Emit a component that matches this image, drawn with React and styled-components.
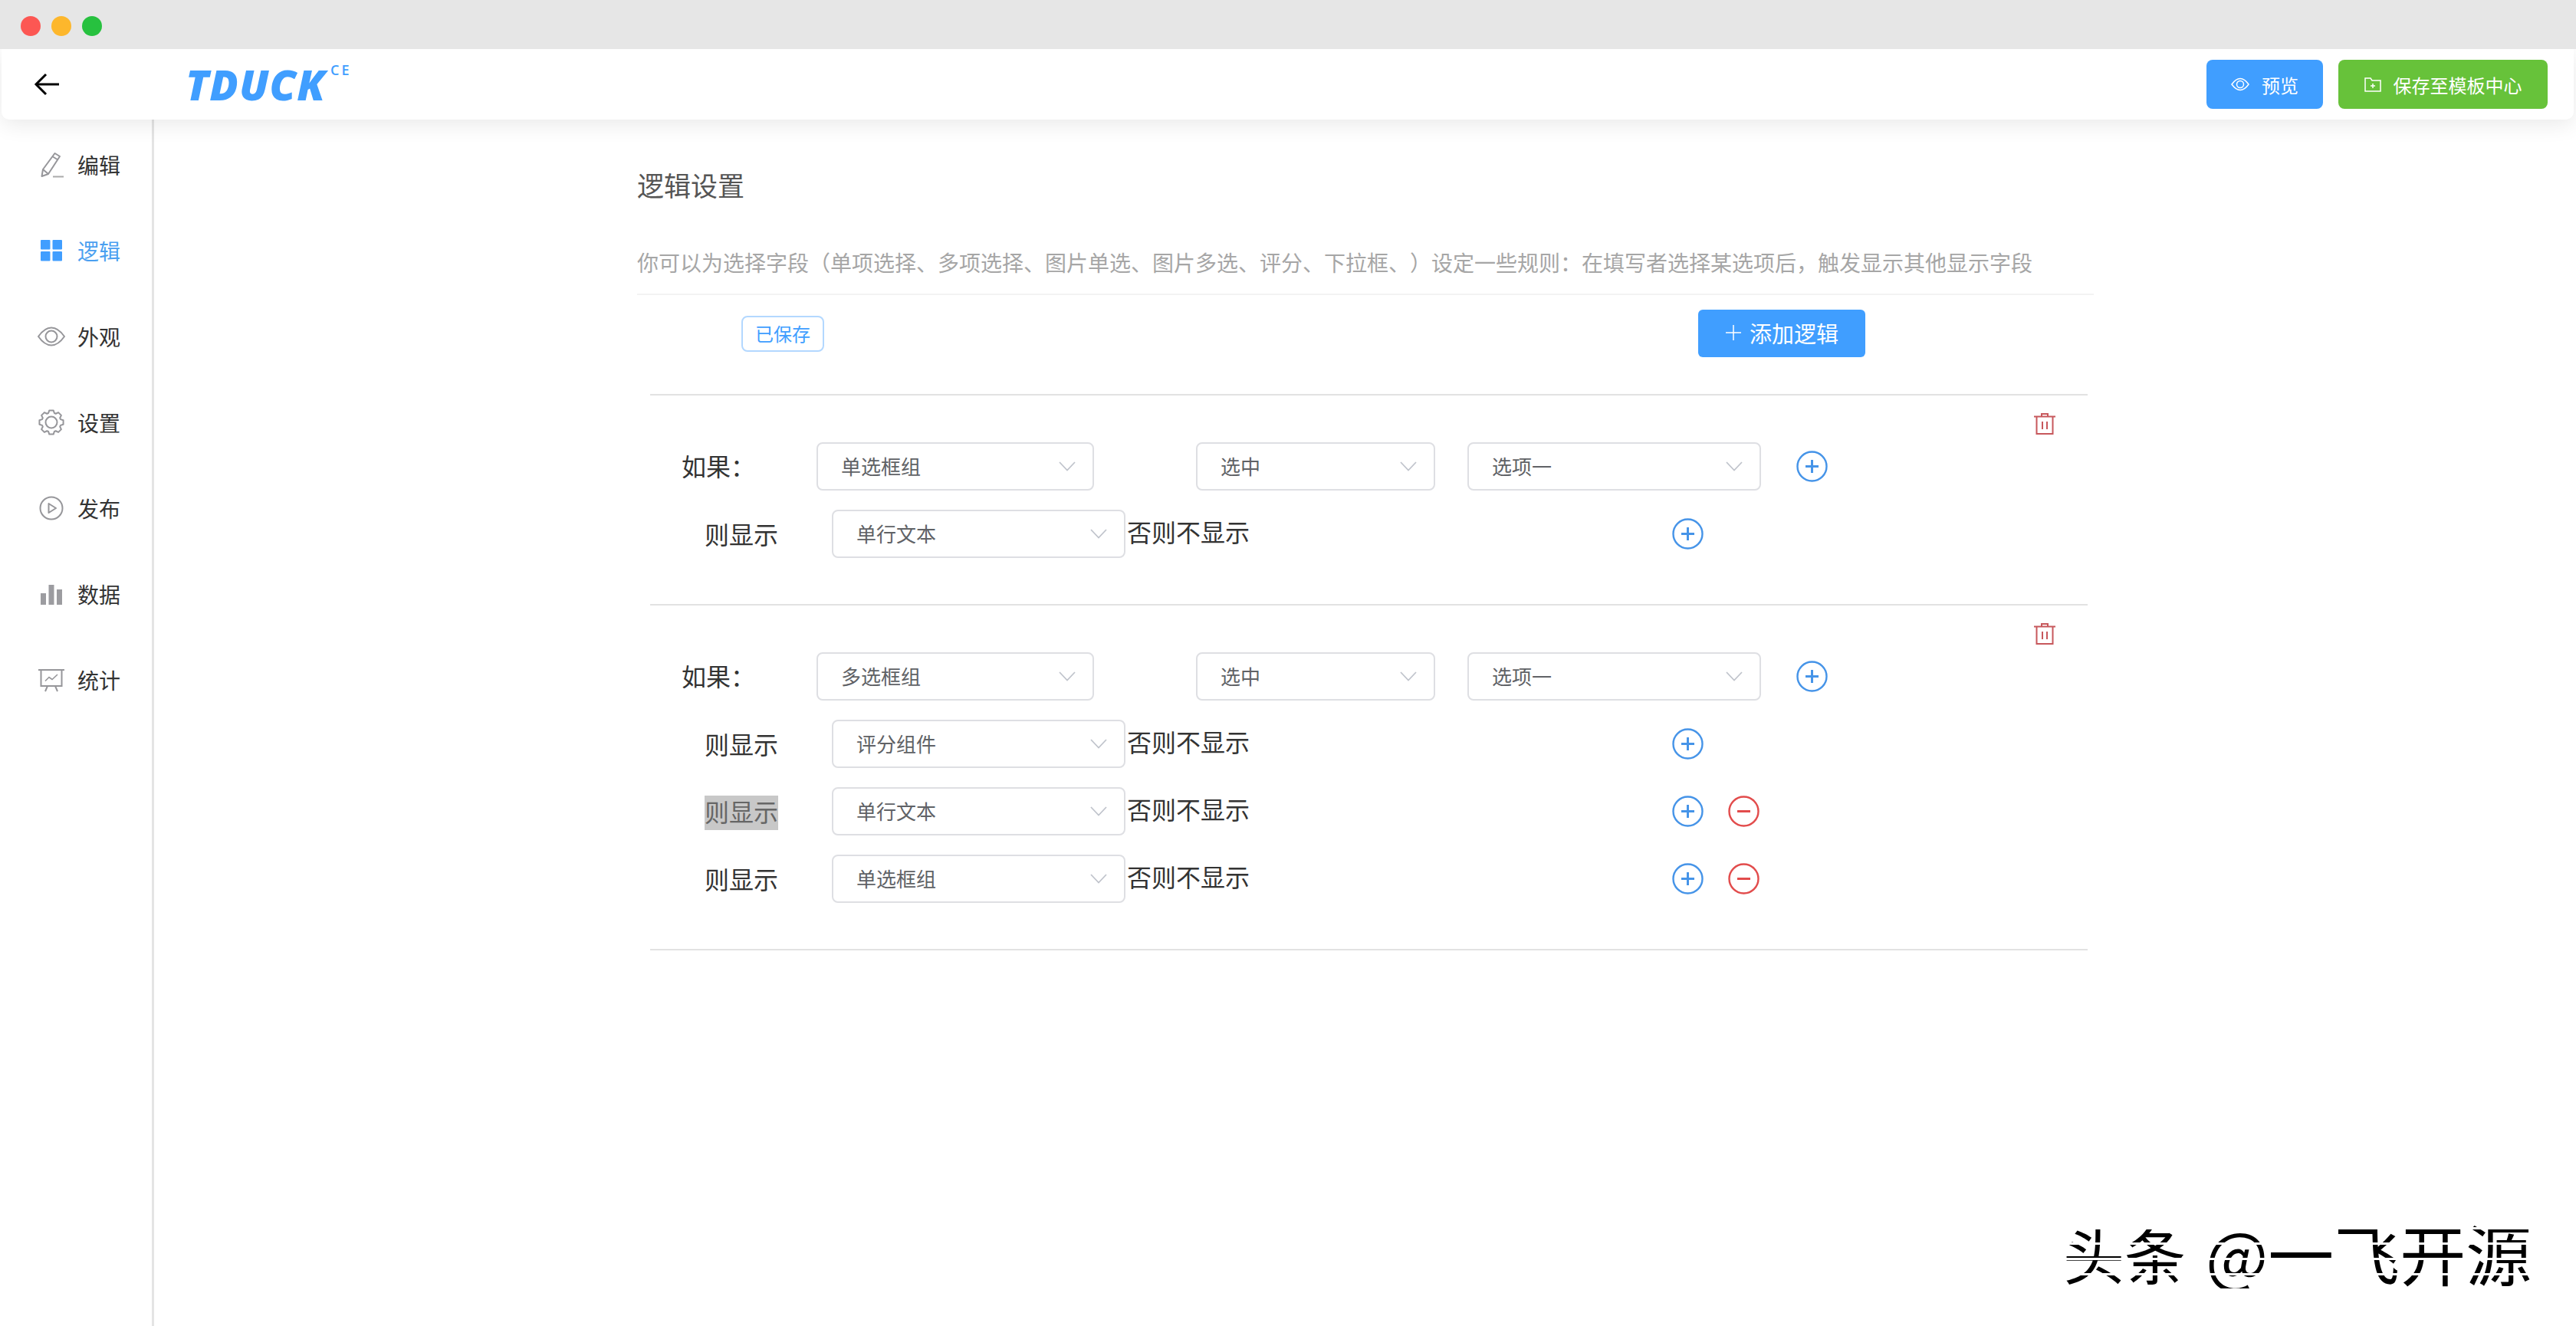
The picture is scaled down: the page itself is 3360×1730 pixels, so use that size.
import React from "react";
import styled, { createGlobalStyle } from "styled-components";

const GlobalStyle = createGlobalStyle`
  html, body {
    margin: 0;
    padding: 0;
    background: #fff;
  }
  body {
    font-family: "Noto Sans CJK SC", "Noto Sans", sans-serif;
    text-spacing-trim: space-all;
    overflow: hidden;
  }
  * {
    box-sizing: border-box;
  }
`;

const Page = styled.div`
  position: relative;
  width: 3360px;
  height: 1730px;
  display: flex;
  flex-direction: column;
  background: #fff;
  overflow: hidden;
`;

const TitleBar = styled.div`
  position: relative;
  z-index: 3;
  height: 64px;
  flex: none;
  display: flex;
  align-items: center;
  gap: 14px;
  padding: 4px 0 0 27px;
  background: #e6e6e6;
`;

const Light = styled.span`
  width: 26px;
  height: 26px;
  border-radius: 50%;
  background: ${(p) => p.$color};
`;

const Header = styled.header`
  position: relative;
  z-index: 2;
  height: 92px;
  flex: none;
  margin: 0 3px 0 2px;
  padding: 0 34px 0 42px;
  display: flex;
  align-items: center;
  background: #fff;
  border-radius: 0 0 10px 10px;
  box-shadow: 0 6px 28px rgba(0, 0, 0, 0.09);
`;

const BackIcon = styled.svg`
  width: 34px;
  height: 30px;
  flex: none;
`;

const Logo = styled.div`
  margin-left: 164px;
  display: flex;
  align-items: flex-start;
  color: #409eff;
  font-family: "Open Sans", "Liberation Sans", sans-serif;
  font-style: italic;
  font-weight: 800;
`;

const LogoText = styled.span`
  font-size: 55px;
  line-height: 60px;
  letter-spacing: 1px;
`;

const LogoSup = styled.span`
  margin: 0 0 0 6px;
  font-style: normal;
  font-weight: 600;
  font-size: 18px;
  line-height: 22px;
  letter-spacing: 3px;
`;

const HeaderActions = styled.div`
  margin-left: auto;
  display: flex;
  gap: 20px;
`;

const HeaderButton = styled.div`
  width: ${(p) => p.$width}px;
  height: 64px;
  display: flex;
  align-items: center;
  justify-content: center;
  gap: 16px;
  color: #fff;
  font-size: 24px;
  border-radius: 8px;
  background: ${(p) => p.$color};
`;

const Body = styled.div`
  flex: 1;
  display: flex;
  min-height: 0;
`;

const Sidebar = styled.nav`
  width: 201px;
  flex: none;
  padding: 3px 0 0 49px;
  border-right: 3px solid #e4e4e4;
`;

const NavItem = styled.div`
  height: 112px;
  display: flex;
  align-items: center;
  gap: 16px;
  font-size: 28px;
  color: ${(p) => (p.$active ? "#4a9ff0" : "#333")};
`;

const NavIcon = styled.svg`
  width: 36px;
  height: 36px;
  flex: none;
`;

const Main = styled.main`
  width: 1900px;
  margin-left: 630px;
  padding-top: 60px;
`;

const Title = styled.h2`
  margin: 0;
  font-size: 35px;
  line-height: 50px;
  font-weight: 400;
  color: #555;
`;

const Desc = styled.p`
  margin: 56px 0 0;
  padding-bottom: 21px;
  font-size: 28px;
  line-height: 40px;
  color: #a6a6a6;
  white-space: nowrap;
  border-bottom: 2px solid #f3f3f3;
`;

const Toolbar = styled.div`
  height: 129px;
  padding: 19px 298px 0 136px;
  display: flex;
  align-items: flex-start;
  justify-content: space-between;
`;

const SavedTag = styled.div`
  margin-top: 8px;
  width: 108px;
  height: 47px;
  padding-bottom: 2px;
  display: flex;
  align-items: center;
  justify-content: center;
  color: #409eff;
  font-size: 24px;
  border: 2px solid #b3d8ff;
  border-radius: 8px;
  background: #fff;
`;

const AddButton = styled.div`
  width: 218px;
  height: 62px;
  padding-bottom: 2px;
  display: flex;
  align-items: center;
  justify-content: center;
  gap: 10px;
  color: #fff;
  font-size: 29px;
  border-radius: 6px;
  background: #409eff;
`;

const Groups = styled.div`
  margin-left: 17px;
  width: 1875px;
  border-bottom: 2px solid #e2e2e2;
`;

const Group = styled.section`
  padding: 23px 0 60px;
  border-top: 2px solid #e2e2e2;
`;

const TrashRow = styled.div`
  height: 38px;
  padding-right: 42px;
  display: flex;
  justify-content: flex-end;
  align-items: flex-start;
`;

const TrashIcon = styled.svg`
  width: 28px;
  height: 28px;
`;

const Rows = styled.div`
  display: flex;
  flex-direction: column;
  gap: 25px;
`;

const Row = styled.div`
  height: 63px;
  display: flex;
  align-items: center;
  padding-left: ${(p) => p.$indent}px;
`;

const RowLabel = styled.span`
  width: ${(p) => p.$width}px;
  flex: none;
  margin-top: ${(p) => p.$lift || 0}px;
  font-size: 32px;
  line-height: 46px;
  color: #333;
`;

const Highlight = styled.span`
  display: inline-block;
  height: 45px;
  line-height: 41px;
  color: ${(p) => (p.$selected ? "#666" : "inherit")};
  background: ${(p) => (p.$selected ? "#c8c8c8" : "transparent")};
`;

const Select = styled.div`
  width: ${(p) => p.$width}px;
  height: 63px;
  flex: none;
  margin-left: ${(p) => p.$gap || 0}px;
  padding: 0 22px 2px 30px;
  display: flex;
  align-items: center;
  justify-content: space-between;
  font-size: 26px;
  color: #606266;
  background: #fff;
  border: 2px solid #dedfe3;
  border-radius: 8px;
`;

const Chevron = styled.svg`
  width: 22px;
  height: 14px;
  flex: none;
`;

const Otherwise = styled.span`
  width: 160px;
  flex: none;
  margin: -8px 0 0 2px;
  font-size: 32px;
  line-height: 46px;
  color: #333;
`;

const RoundIcon = styled.svg`
  width: 41px;
  height: 41px;
  flex: none;
  margin-left: ${(p) => p.$gap}px;
`;

const Watermark = styled.div`
  position: absolute;
  left: 2691px;
  top: 1584px;
  display: flex;
  align-items: center;
  font-size: 86px;
  font-weight: 400;
  line-height: 100px;
  white-space: nowrap;
  color: transparent;
  background: repeating-linear-gradient(#000 0 17px, #fff 17px 20px);
  -webkit-background-clip: text;
  background-clip: text;
`;

const WatermarkSmall = styled.span`
  font-size: 80px;
  margin-right: 26px;
`;

const gearPath = (() => {
  const pts = [];
  const teeth = 8;
  for (let i = 0; i < teeth; i++) {
    const a = (i * Math.PI * 2) / teeth;
    const w = Math.PI / 11;
    pts.push([a - w * 1.1, 12.6], [a - w * 0.6, 15.8], [a + w * 0.6, 15.8], [a + w * 1.1, 12.6]);
  }
  return (
    pts
      .map(([a, r], i) => {
        const x = (18 + r * Math.cos(a)).toFixed(2);
        const y = (18 + r * Math.sin(a)).toFixed(2);
        return `${i ? "L" : "M"}${x} ${y}`;
      })
      .join(" ") + " Z"
  );
})();

const GRAY = "#96969a";

const EditIcon = () => (
  <NavIcon viewBox="0 0 36 36" fill="none" stroke={GRAY} strokeWidth="2">
    <path d="M22.5 3 L29 7 L14 30 L5.5 33 L7 24 Z" strokeLinejoin="round" />
    <path d="M20 7.5 L26.5 11.5 M7 24 L14 30" />
    <path d="M20 33.5 H34" stroke="#aaa" />
  </NavIcon>
);

const GridIcon = () => (
  <NavIcon viewBox="0 0 36 36" fill="#409eff">
    <rect x="4" y="4" width="12.5" height="12.5" rx="1" />
    <rect x="19.5" y="4" width="12.5" height="12.5" rx="1" />
    <rect x="4" y="19" width="12.5" height="12.5" rx="1" />
    <rect x="19.5" y="19" width="12.5" height="12.5" rx="1" />
  </NavIcon>
);

const EyeIcon = () => (
  <NavIcon viewBox="0 0 36 36" fill="none" stroke={GRAY} strokeWidth="2">
    <path d="M1 18 C7 9.5 12 6.5 18 6.5 S29 9.5 35 18 C29 26.5 24 29.5 18 29.5 S7 26.5 1 18 Z" />
    <circle cx="18" cy="18" r="7.5" />
  </NavIcon>
);

const GearIcon = () => (
  <NavIcon viewBox="0 0 36 36" fill="none" stroke={GRAY} strokeWidth="2">
    <path d={gearPath} strokeLinejoin="round" />
    <circle cx="18" cy="18" r="7.5" />
  </NavIcon>
);

const PlayIcon = () => (
  <NavIcon viewBox="0 0 36 36" fill="none" stroke={GRAY} strokeWidth="2">
    <circle cx="18" cy="18" r="14.5" />
    <path d="M14.5 12 L24 18 L14.5 24 Z" strokeLinejoin="round" />
  </NavIcon>
);

const BarsIcon = () => (
  <NavIcon viewBox="0 0 36 36" fill="#9c9ca0">
    <rect x="4" y="17" width="7" height="15" />
    <rect x="14.5" y="6" width="7" height="26" />
    <rect x="25" y="12" width="7" height="20" />
  </NavIcon>
);

const ChartIcon = () => (
  <NavIcon viewBox="0 0 36 36" fill="none" stroke={GRAY} strokeWidth="2">
    <path d="M1 5 H35" />
    <path d="M4.5 5 V26 H31.5 V5" />
    <path d="M10 19.5 L15 14.5 L19 17.5 L26 11" strokeWidth="1.6" />
    <path d="M13 26 L10 33 M23 26 L26 33" />
  </NavIcon>
);

const navItems = [
  { label: "编辑", Icon: EditIcon },
  { label: "逻辑", Icon: GridIcon, active: true },
  { label: "外观", Icon: EyeIcon },
  { label: "设置", Icon: GearIcon },
  { label: "发布", Icon: PlayIcon },
  { label: "数据", Icon: BarsIcon },
  { label: "统计", Icon: ChartIcon },
];

const logicGroups = [
  {
    field: "单选框组",
    targets: [{ name: "单行文本" }],
  },
  {
    field: "多选框组",
    targets: [
      { name: "评分组件" },
      { name: "单行文本", selected: true, removable: true },
      { name: "单选框组", removable: true },
    ],
  },
];

const ChevronDown = () => (
  <Chevron viewBox="0 0 22 14" fill="none" stroke="#c0c4cc" strokeWidth="1.8">
    <path d="M1 2 L11 12.5 L21 2" />
  </Chevron>
);

const PlusCircle = ({ gap }) => (
  <RoundIcon $gap={gap} viewBox="0 0 41 41" fill="none" stroke="#4694e8" strokeWidth="2.4">
    <circle cx="20.5" cy="20.5" r="19" />
    <path d="M20.5 12 V29 M12 20.5 H29" strokeWidth="3" />
  </RoundIcon>
);

const MinusCircle = ({ gap }) => (
  <RoundIcon $gap={gap} viewBox="0 0 41 41" fill="none" stroke="#e24c4c" strokeWidth="2.4">
    <circle cx="20.5" cy="20.5" r="19" />
    <path d="M12 20.5 H29" strokeWidth="3" />
  </RoundIcon>
);

const Trash = () => (
  <TrashIcon viewBox="0 0 28 28" fill="none" stroke="#c7585c" strokeWidth="2">
    <path d="M0 4.5 H28" />
    <path d="M10 4.5 V1 H18 V4.5" />
    <path d="M3.5 4.5 V27 H24.5 V4.5" />
    <path d="M11 11 V21 M17 11 V21" />
  </TrashIcon>
);

export default function App() {
  return (
    <Page>
      <GlobalStyle />
      <TitleBar>
        <Light $color="#fc5753" />
        <Light $color="#fdb72c" />
        <Light $color="#27c13f" />
      </TitleBar>

      <Header>
        <BackIcon viewBox="0 0 34 30" fill="none" stroke="#000" strokeWidth="3">
          <path d="M33 15 H3" />
          <path d="M16 2 L3 15 L16 28" />
        </BackIcon>
        <Logo>
          <LogoText>TDUCK</LogoText>
          <LogoSup>CE</LogoSup>
        </Logo>
        <HeaderActions>
          <HeaderButton $width={152} $color="#409eff">
            <svg width="24" height="18" viewBox="0 0 24 18" fill="none" stroke="#fff" strokeWidth="1.5">
              <path d="M1 9 C5 3.5 8 1.5 12 1.5 S19 3.5 23 9 C19 14.5 16 16.5 12 16.5 S5 14.5 1 9 Z" />
              <circle cx="12" cy="9" r="4.5" />
            </svg>
            预览
          </HeaderButton>
          <HeaderButton $width={273} $color="#67c23a">
            <svg width="22" height="19" viewBox="0 0 22 19" fill="none" stroke="#fff" strokeWidth="1.5">
              <path d="M1 1 H8 L10 4 H21 V18 H1 Z" />
              <path d="M11 8 V14 M8 11 H14" />
            </svg>
            保存至模板中心
          </HeaderButton>
        </HeaderActions>
      </Header>

      <Body>
        <Sidebar>
          {navItems.map(({ label, Icon, active }) => (
            <NavItem key={label} $active={active}>
              <Icon />
              {label}
            </NavItem>
          ))}
        </Sidebar>

        <Main>
          <Title>逻辑设置</Title>
          <Desc>
            你可以为选择字段（单项选择、多项选择、图片单选、图片多选、评分、下拉框、）设定一些规则：在填写者选择某选项后，触发显示其他显示字段
          </Desc>
          <Toolbar>
            <SavedTag>已保存</SavedTag>
            <AddButton>
              <svg width="22" height="22" viewBox="0 0 22 22" fill="none" stroke="#fff" strokeWidth="1.5">
                <path d="M11 1 V21 M1 11 H21" />
              </svg>
              添加逻辑
            </AddButton>
          </Toolbar>

          <Groups>
            {logicGroups.map((group) => (
              <Group key={group.field}>
                <TrashRow>
                  <Trash />
                </TrashRow>
                <Rows>
                  <Row $indent={41}>
                    <RowLabel $width={176} $lift={-4}>
                      如果：
                    </RowLabel>
                    <Select $width={362}>
                      {group.field}
                      <ChevronDown />
                    </Select>
                    <Select $width={312} $gap={133}>
                      选中
                      <ChevronDown />
                    </Select>
                    <Select $width={383} $gap={42}>
                      选项一
                      <ChevronDown />
                    </Select>
                    <PlusCircle gap={46} />
                  </Row>
                  {group.targets.map((target, i) => (
                    <Row key={i} $indent={71}>
                      <RowLabel $width={166}>
                        <Highlight $selected={target.selected}>则显示</Highlight>
                      </RowLabel>
                      <Select $width={383}>
                        {target.name}
                        <ChevronDown />
                      </Select>
                      <Otherwise>否则不显示</Otherwise>
                      <PlusCircle gap={551} />
                      {target.removable && <MinusCircle gap={32} />}
                    </Row>
                  ))}
                </Rows>
              </Group>
            ))}
          </Groups>
        </Main>
      </Body>

      <Watermark>
        <WatermarkSmall>头条</WatermarkSmall>@一飞开源
      </Watermark>
    </Page>
  );
}
